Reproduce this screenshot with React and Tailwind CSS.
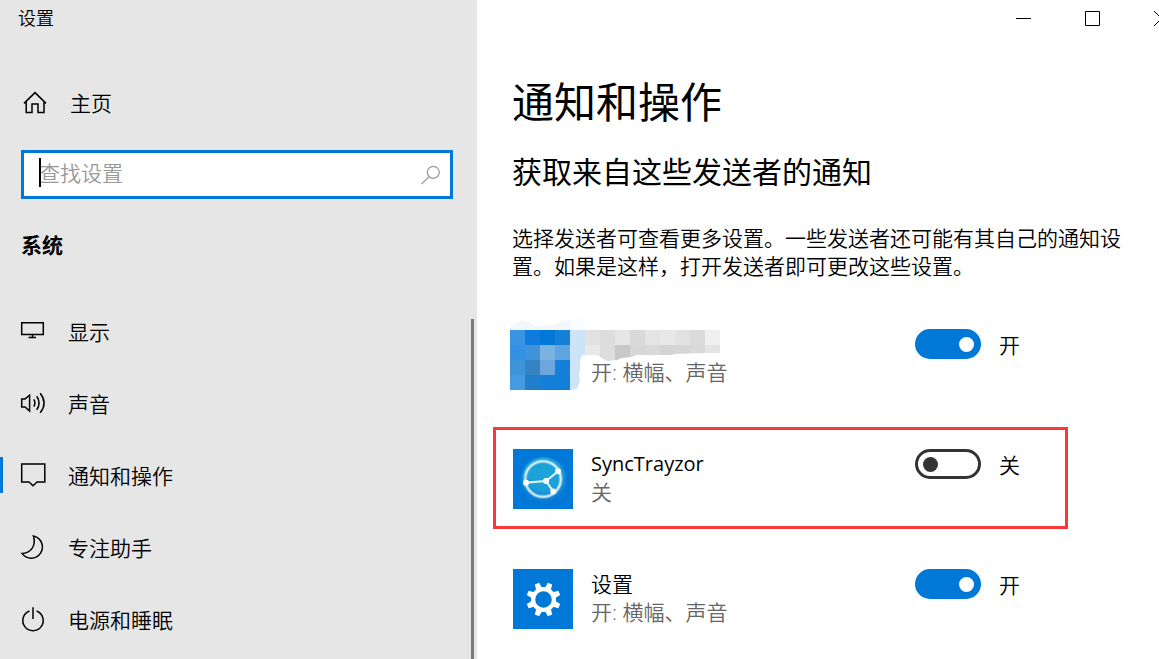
import { useState } from "react";

function LineIcon({ children }) {
  return (
    <svg
      viewBox="0 0 24 24"
      className="size-6 shrink-0 overflow-visible"
      fill="none"
      stroke="#000"
      strokeWidth="1.5"
      aria-hidden="true"
    >
      {children}
    </svg>
  );
}

const navItems = [
  {
    label: "显示",
    icon: (
      <>
        <path d="M.7 3.7H22.3V15.4H.7Z" />
        <path d="M11.5 15.4V18.4M7.5 18.5H15" />
      </>
    ),
  },
  {
    label: "声音",
    icon: (
      <>
        <path d="M.7 7.9H4L8.6 4.2V20L4 15.9H.7Z" />
        <path d="M12.8 8.4Q15 12 12.8 15.6M15.7 5.2Q20.5 12 15.7 18.8M19.2 2.2Q27 12 19.2 21.8" />
      </>
    ),
  },
  {
    label: "通知和操作",
    current: true,
    icon: <path d="M.7 1H23.8V19H16L12 22.8L8 19H.7Z" />,
  },
  {
    label: "专注助手",
    icon: <path d="M12.4 1A11.2 11.2 0 1 1 1 18.4C9 18.4 15.6 11.5 12.4 1Z" />,
  },
  {
    label: "电源和睡眠",
    icon: <path d="M8.4 4A10.2 10.2 0 1 0 15.6 4M12 .3V12" />,
  },
];

const mosaicCells = [
  ["#3994e3", "#0d7be0", "#0078d7", "#1680d8"],
  ["#3392e3", "#4093d8", "#7ab2e0", "#5ca5e0"],
  ["#3f93d8", "#3683c3", "#6ca6dc", "#1480da"],
  ["#459be2", "#1f7fcb", "#137fd9", "#1080da"],
];
const nameCellsTop = ["#e1e1e1", "#dcdcdc", "#e6e6e6", "#d9d9d9", "#e4e4e4", "#e8e8e8", "#e2e2e2", "#dbdbdb", "#f0f0f0"];
const nameCellsBottom = ["#e8e8e8", "#dddddd", "#c8c8c8", "#d7d7d7", "#d9d9d9", "#d4d4d4", "#d6d6d6", "#dadada", "#e4e4e4"];

function MosaicIcon() {
  return (
    <div className="relative size-[60px] shrink-0">
      <svg
        viewBox="0 0 210 72"
        className="absolute -top-[10px] -left-[3px] h-[72px] w-[210px]"
        aria-hidden="true"
      >
        <defs>
          <clipPath id="name-edge">
            <path d="M75 11H210V34H195L166 35L160 36H126L122 38L112 39L107 41L97 42L90 38L86 36H75Z" />
          </clipPath>
        </defs>
        <path d="M0 11V8L5 4L12 1L20 3L26 7L44 6L54 2L60 1V11Z" fill="#f1f7fd" />
        <path d="M60 0H75V11H60Z" fill="#fafdff" />
        <path d="M60 11H75V36H72L70 42L70 50L69 55L70 62L67 70L60 71Z" fill="#cce3f8" />
        <g shapeRendering="crispEdges">
          {mosaicCells.map((row, y) =>
            row.map((fill, x) => (
              <rect key={`${x}-${y}`} x={x * 15} y={11 + y * 15} width="15" height="15" fill={fill} />
            ))
          )}
        </g>
        <g clipPath="url(#name-edge)">
          {nameCellsTop.map((fill, x) => (
            <rect key={x} x={75 + x * 15} y="11" width="15" height="15" fill={fill} />
          ))}
          {nameCellsBottom.map((fill, x) => (
            <rect key={x} x={75 + x * 15} y="26" width="15" height="16" fill={fill} />
          ))}
        </g>
      </svg>
    </div>
  );
}

function SyncIcon() {
  return (
    <svg viewBox="0 0 60 60" className="size-[60px] shrink-0 bg-[#0078d7]" aria-hidden="true">
      <defs>
        <radialGradient id="sync-disc" cx=".5" cy=".35" r=".65">
          <stop offset="0" stopColor="#1ea4d8" />
          <stop offset=".6" stopColor="#1b9fd8" />
          <stop offset="1" stopColor="#0678d6" />
        </radialGradient>
      </defs>
      <circle cx="30.5" cy="30.5" r="22.5" fill="url(#sync-disc)" />
      <g fill="none" stroke="#fff">
        <circle cx="30" cy="30" r="17.8" strokeWidth="4" strokeOpacity=".3" />
        <circle cx="30" cy="30" r="17.8" strokeWidth="2" strokeOpacity=".7" />
        <path d="M13 33.7L33 32L45 22.3M33 32L40.3 42.7" strokeWidth="2.2" strokeOpacity=".85" />
      </g>
      <g fill="#fff">
        <circle cx="13" cy="33.7" r="3" />
        <circle cx="45" cy="22.3" r="3" />
        <circle cx="40.3" cy="42.5" r="3" />
        <circle cx="33" cy="32" r="3" />
      </g>
    </svg>
  );
}

const toothAngles = [22.5, 67.5, 112.5, 157.5, 202.5, 247.5, 292.5, 337.5];

function GearIcon() {
  return (
    <svg viewBox="0 0 60 60" className="size-[60px] shrink-0 bg-[#0078d7]" aria-hidden="true">
      <circle cx="30.5" cy="30.5" r="10.4" fill="none" stroke="#fff" strokeWidth="4.2" />
      {toothAngles.map((angle) => (
        <path key={angle} d="M27.3 19L28.2 13.4H32.8L33.7 19Z" fill="#fff" transform={`rotate(${angle} 30.5 30.5)`} />
      ))}
    </svg>
  );
}

function SenderRow({ id, name, icon, initial, highlighted, latin }) {
  const [on, setOn] = useState(initial);
  return (
    <li
      className={`flex border-3 pt-[19px] pr-[45px] pb-[17px] pl-[17px] ${
        highlighted ? "border-[#fb3838]" : "border-transparent"
      }`}
    >
      {icon}
      <div className="ml-[18px] flex-1 pt-px">
        <div className={latin ? "h-7 text-xl leading-7 font-normal" : "h-7"}>{name}</div>
        <div className="text-[#666]">{on ? "开: 横幅、声音" : "关"}</div>
      </div>
      <div className="flex items-start gap-[18px]">
        <input
          id={id}
          type="checkbox"
          role="switch"
          aria-label={name || "应用通知"}
          checked={on}
          onChange={() => setOn(!on)}
          className="flex h-[30px] w-[66px] appearance-none items-start rounded-full border-3 border-[#333] p-[5px] before:block before:size-[15px] before:rounded-full before:bg-[#333] checked:justify-end checked:border-[#0078d7] checked:bg-[#0078d7] checked:pr-1 checked:before:bg-white"
        />
        <label htmlFor={id} className="pt-0.5">
          {on ? "开" : "关"}
        </label>
      </div>
    </li>
  );
}

export default function App() {
  return (
    <div className="flex min-h-screen bg-white font-['Open_Sans','Noto_Sans_CJK_SC',sans-serif] text-[21px] leading-7 font-[350] text-black">
      <aside className="flex w-[477px] shrink-0 flex-col bg-[#e6e6e6]">
        <div className="flex h-9 items-center pl-[18px] text-lg">设置</div>
        <a href="#home" className="mt-[43px] flex h-12 items-center gap-[23px] pl-[23px]">
          <LineIcon>
            <path d="M1 12.4L12 1.6L23 12.4M3.2 10.8V21.4H9V13H15V21.4H21V10.8" />
          </LineIcon>
          主页
        </a>
        <div className="relative mt-[23px] mr-6 ml-[21px] flex h-[49px] items-center border-3 border-[#0078d7] bg-white pr-[9px] pl-[15px]">
          <span className="absolute top-[5px] left-[15px] h-[29px] w-0.5 bg-black" />
          <input
            type="text"
            aria-label="查找设置"
            placeholder="查找设置"
            className="min-w-0 flex-1 bg-transparent pb-[3px] outline-none placeholder:text-[#999]"
          />
          <svg viewBox="0 0 20 20" className="size-5 shrink-0" fill="none" stroke="#999" strokeWidth="1.2" aria-hidden="true">
            <circle cx="12.3" cy="7.3" r="6" />
            <path d="M8 11.6L.6 19" />
          </svg>
        </div>
        <h2 className="mt-8 pl-[21px] font-bold">系统</h2>
        <div className="mt-9 flex flex-1">
          <nav className="flex-1">
            {navItems.map((item) => (
              <a
                key={item.label}
                href={`#${item.label}`}
                aria-current={item.current ? "page" : undefined}
                className="flex h-[72px] items-center"
              >
                <span className={`mr-[18px] h-9 w-[3px] ${item.current ? "bg-[#0078d7]" : ""}`} />
                <LineIcon>{item.icon}</LineIcon>
                <span className="ml-[23px] pt-0.5">{item.label}</span>
              </a>
            ))}
          </nav>
          <div className="mt-6 mr-[3px] w-[3px] bg-[#7a7a7a]" />
        </div>
      </aside>

      <main className="min-w-0 flex-1 overflow-hidden">
        <div className="-mr-[37px] flex h-9 justify-end">
          <button type="button" aria-label="最小化" className="flex w-[69px] items-center justify-center">
            <svg viewBox="0 0 15 15" className="size-[15px]" fill="none" stroke="#000" aria-hidden="true">
              <path d="M0 7.5H15" />
            </svg>
          </button>
          <button type="button" aria-label="最大化" className="flex w-[69px] items-center justify-center">
            <svg viewBox="0 0 15 15" className="size-[15px]" fill="none" stroke="#000" aria-hidden="true">
              <path d="M.5 .5H14.5V14.5H.5Z" />
            </svg>
          </button>
          <button type="button" aria-label="关闭" className="flex w-[69px] items-center justify-center">
            <svg viewBox="0 0 15 15" className="size-[15px]" fill="none" stroke="#000" aria-hidden="true">
              <path d="M0 0L15 15M15 0L0 15" />
            </svg>
          </button>
        </div>
        <div className="pr-9 pl-[35px]">
          <h1 className="mt-[38px] text-[42px] leading-[56px] font-normal">通知和操作</h1>
          <h2 className="mt-[22px] text-[30px] leading-10 font-normal">获取来自这些发送者的通知</h2>
          <p className="mt-8">
            选择发送者可查看更多设置。一些发送者还可能有其自己的通知设置。如果是这样，打开发送者即可更改这些设置。
          </p>
          <ul className="mt-[27px] -ml-[19px] flex max-w-[575px] flex-col gap-[18px]">
            <SenderRow id="sender-app" name="" icon={<MosaicIcon />} initial={true} />
            <SenderRow id="sender-synctrayzor" name="SyncTrayzor" icon={<SyncIcon />} initial={false} highlighted latin />
            <SenderRow id="sender-settings" name="设置" icon={<GearIcon />} initial={true} />
          </ul>
        </div>
      </main>
    </div>
  );
}
